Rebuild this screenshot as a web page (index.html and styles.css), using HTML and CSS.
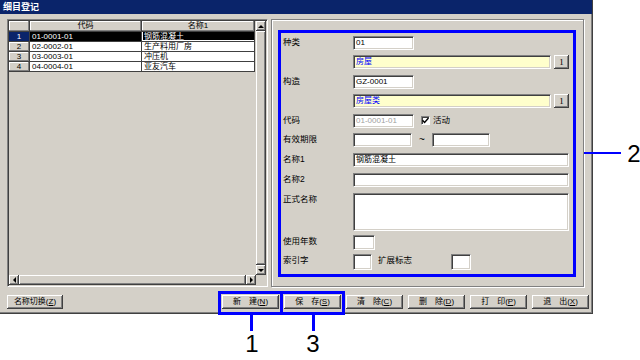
FILE: index.html
```html
<html>
<head>
<title>细目登记</title>
<link rel="stylesheet" href="styles.css">
</head>
<body>
<div class="window">
  <div class="titlebar">细目登记</div>
  <div class="client">
    <div class="panes">

      <div class="list-pane">
        <div class="list-top">
          <div class="grid">
            <div class="grid-row head">
              <span class="rh"></span><span class="hc">代码</span><span class="hc">名称1</span>
            </div>
            <div class="grid-row sel">
              <span class="rh">1</span><span class="cell">01-0001-01</span><span class="cell focus">钢筋混凝土</span>
            </div>
            <div class="grid-row">
              <span class="rh">2</span><span class="cell">02-0002-01</span><span class="cell">生产料用厂房</span>
            </div>
            <div class="grid-row">
              <span class="rh">3</span><span class="cell">03-0003-01</span><span class="cell">冲压机</span>
            </div>
            <div class="grid-row">
              <span class="rh">4</span><span class="cell">04-0004-01</span><span class="cell">亚友汽车</span>
            </div>
          </div>
          <div class="vscroll">
            <span class="sb-btn up"></span><span class="sb-thumb"></span><span class="sb-btn down"></span>
          </div>
        </div>
        <div class="hscroll">
          <span class="sb-btn left"></span><span class="sb-thumb"></span><span class="sb-btn right"></span><span class="sb-corner"></span>
        </div>
      </div>

      <div class="form-pane">
        <div class="form-frame">
          <div class="row"><span class="lbl">种类</span><span class="edit w61">01</span></div>
          <div class="row"><span class="lbl"></span><span class="edit ref">房屋</span><span class="pick">1</span></div>
          <div class="row loose"><span class="lbl">构造</span><span class="edit w61">GZ-0001</span></div>
          <div class="row"><span class="lbl"></span><span class="edit ref">房屋类</span><span class="pick">1</span></div>
          <div class="row loose">
            <span class="lbl">代码</span><span class="edit w61 off">01-0001-01</span>
            <span class="check"><svg width="7" height="7" viewBox="0 0 7 7"><path d="M0.5 3.2 L2.6 5.4 L6.5 1" fill="none" stroke="#000" stroke-width="1.4"/></svg></span>
            <span class="side">活动</span>
          </div>
          <div class="row">
            <span class="lbl">有效期限</span><span class="edit w59"></span><span class="tilde">~</span><span class="edit w58"></span>
          </div>
          <div class="row loose"><span class="lbl">名称1</span><span class="edit full">钢筋混凝土</span></div>
          <div class="row loose"><span class="lbl">名称2</span><span class="edit full"></span></div>
          <div class="row loose"><span class="lbl">正式名称</span><span class="edit full memo"></span></div>
          <div class="row tight"><span class="lbl">使用年数</span><span class="edit w22 h15"></span></div>
          <div class="row tight">
            <span class="lbl">索引字</span><span class="edit w19 h16"></span>
            <span class="lbl ext">扩展标志</span><span class="edit w20 h16"></span>
          </div>
        </div>
      </div>

    </div>

    <div class="buttons">
      <span class="btn switch">名称切换(<u>Z</u>)</span>
      <div class="btn-group">
        <span class="btn">新&#12288;建(<u>N</u>)</span>
        <span class="btn">保&#12288;存(<u>S</u>)</span>
        <span class="btn">清&#12288;除(<u>C</u>)</span>
        <span class="btn">删&#12288;除(<u>D</u>)</span>
        <span class="btn">打&#12288;印(<u>P</u>)</span>
        <span class="btn">退&#12288;出(<u>X</u>)</span>
      </div>
    </div>
  </div>
</div>

<!-- callouts -->
<div class="callout box-new"></div>
<div class="callout box-save"></div>
<div class="lead lead-new"></div>
<div class="lead lead-save"></div>
<div class="lead lead-form"></div>
<div class="num num-new">1</div>
<div class="num num-save">3</div>
<div class="num num-form">2</div>
</body>
</html>
```

FILE: styles.css
```css
body {
  margin: 0;
  width: 640px; height: 360px;
  overflow: hidden;
  position: relative;
  background: #fff;
  color: #000;
  font-family: "Liberation Sans", "Noto Sans CJK SC", sans-serif;
  font-size: 8px;
}

/* window chrome */
.window {
  width: 592px; height: 313px;
  background: #d4d0c8;
  border-right: 1px solid #404040;
  border-bottom: 1px solid #404040;
  box-shadow: inset -1px -1px #808080;
}
.titlebar {
  height: 14px; line-height: 14px;
  padding-left: 3px;
  background: #0a246a;
  color: #fff;
  font-family: "Noto Sans CJK SC", sans-serif;
  font-size: 9px; font-weight: bold;
}
.client { padding: 5px 8px 0 7px; }
.panes { display: flex; gap: 3px; height: 268px; }

/* raised / sunken bits */
.sb-btn, .sb-thumb, .btn, .pick {
  background: #d4d0c8;
  box-shadow: inset -1px -1px #404040, inset 1px 1px #fff, inset -2px -2px #808080;
}

/* left list */
.list-pane {
  width: 261px;
  box-sizing: border-box;
  border: 1px solid;
  border-color: #808080 #fff #fff #808080;
  padding: 1px;
  box-shadow: inset 1px 1px #404040, inset -1px -1px #d4d0c8;
  display: flex; flex-direction: column;
}
.list-top { flex: 1; display: flex; }
.grid { flex: 1; }
.grid-row { display: grid; grid-template-columns: 21px 112px 113px; height: 10px; line-height: 9px; }
.grid-row.head { height: 11px; line-height: 10px; }
.rh, .hc {
  background: #d4d0c8;
  text-align: center;
  box-shadow: inset -1px -1px #808080, inset 1px 1px #fff;
  border-right: 1px solid #404040;
  border-bottom: 1px solid #404040;
}
.cell {
  background: #fff;
  padding-left: 2px;
  white-space: nowrap;
  overflow: hidden;
  border-right: 1px solid #404040;
  border-bottom: 1px solid #404040;
}
.sel .rh { background: #0a246a; color: #fff; box-shadow: none; }
.sel .cell { background: #000; color: #fff; }
.sel .focus { box-shadow: inset 1px 0 #fff, inset 0 -1px #fff; }

.vscroll { width: 10px; display: flex; flex-direction: column; }
.vscroll .sb-btn { height: 10px; }
.vscroll .sb-thumb { flex: 1; }
.hscroll { height: 10px; display: flex; }
.hscroll .sb-btn { width: 10px; }
.hscroll .sb-thumb { flex: 1; }
.sb-corner { width: 10px; }
.sb-btn { display: flex; align-items: center; justify-content: center; }
.sb-btn::before { content: ""; border: 3px solid transparent; }
.up::before { border-top: 0; border-bottom-color: #000; }
.down::before { border-bottom: 0; border-top-color: #000; }
.left::before { border-left: 0; border-right-color: #000; }
.right::before { border-right: 0; border-left-color: #000; }

/* right form */
.form-pane {
  width: 313px;
  box-sizing: border-box;
  border: 1px solid #808080;
  box-shadow: inset 1px 1px #fff, 1px 1px #fff;
  padding: 10px 0 0 6px;
}
.form-frame {
  width: 298px; height: 247px;
  box-sizing: border-box;
  border: 3px solid #0000ff;
  padding: 3px 0 0 2px;
  display: flex; flex-direction: column; gap: 5px;
}
.row { display: flex; align-items: flex-start; }
.row.loose { margin-top: 1px; }
.row.tight { margin-top: -1px; }
.lbl {
  width: 70px; flex: none;
  line-height: 12px;
  font-size: 8.5px;
  white-space: nowrap;
}
.edit {
  height: 14px;
  box-sizing: border-box;
  border: 1px solid;
  border-color: #808080 #fff #fff #808080;
  box-shadow: inset 1px 1px #404040, inset -1px -1px #d4d0c8;
  background: #fff;
  padding-left: 2px;
  line-height: 12px;
  white-space: nowrap;
}
.w61 { width: 61px; }
.w59 { width: 59px; }
.w58 { width: 58px; }
.w22 { width: 22px; }
.w20 { width: 20px; }
.w19 { width: 19px; }
.h15 { height: 15px; }
.h16 { height: 16px; }
.full { width: 216px; }
.memo { height: 38px; }
.ref { width: 198px; background: #ffffcc; color: #0000ff; }
.off { color: #a0a0a0; }
.pick {
  width: 15px; height: 14px; margin-left: 3px;
  text-align: center; line-height: 14px;
  font-family: "Liberation Serif", serif; font-size: 9px;
}
.check {
  width: 9px; height: 9px; margin: 2px 0 0 7px;
  box-sizing: border-box;
  border: 1px solid; border-color: #808080 #fff #fff #808080;
  box-shadow: inset 1px 1px #404040;
  background: #fff;
  display: flex; align-items: center; justify-content: center;
}
.side { margin-left: 3px; line-height: 12px; font-size: 8.5px; }
.tilde { width: 20px; text-align: center; font-size: 10px; line-height: 14px; }
.lbl.ext { width: 73px; margin-left: 6px; }

/* bottom buttons */
.buttons { display: flex; height: 14px; margin: 8px -5px 0 0; }
.btn {
  width: 57px; height: 14px;
  box-sizing: border-box;
  text-align: center; line-height: 14px;
  white-space: nowrap;
}
.btn.switch { width: 56px; }
.btn-group { margin-left: auto; display: flex; gap: 5px; }

/* annotations laid over the screenshot */
.callout { position: absolute; top: 291px; width: 65px; height: 24px; box-sizing: border-box; border: 3px solid #0000ff; }
.box-new { left: 218px; }
.box-save { left: 280px; }
.lead { position: absolute; background: #0000ff; }
.lead-new { left: 250px; top: 315px; width: 3px; height: 16px; }
.lead-save { left: 312px; top: 315px; width: 3px; height: 16px; }
.lead-form { left: 584px; top: 152px; width: 37px; height: 2px; }
.num {
  position: absolute;
  width: 20px;
  text-align: center;
  font-size: 24px; line-height: 24px;
}
.num-new { left: 242px; top: 332px; }
.num-save { left: 303px; top: 332px; }
.num-form { left: 624px; top: 142px; }
```
